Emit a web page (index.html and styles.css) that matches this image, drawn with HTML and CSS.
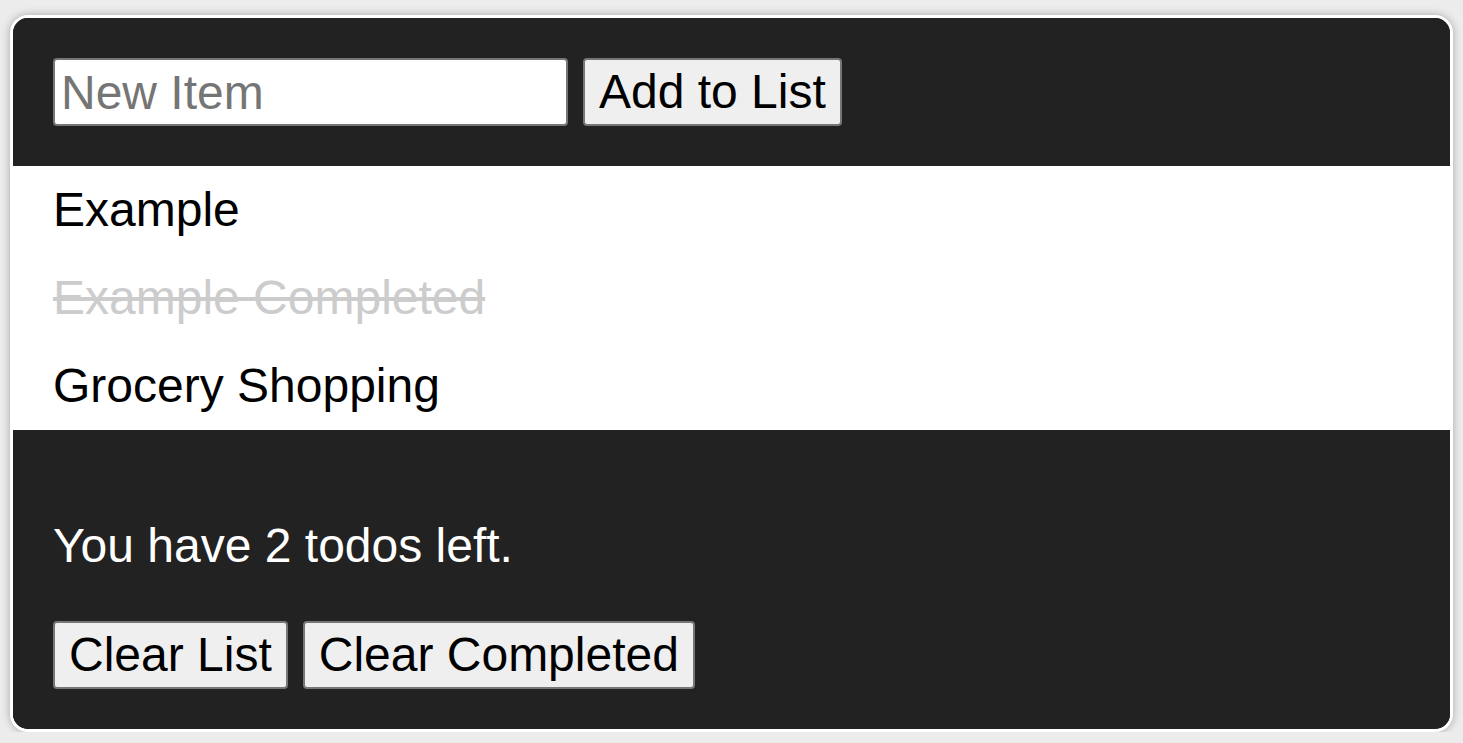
FILE: index.html
```html
<!DOCTYPE html>
<html lang="en">
<head>
<meta charset="utf-8">
<title>Todo List</title>
<link rel="stylesheet" href="styles.css">
</head>
<body>
<div class="card">
  <div class="header">
    <input class="new-item" type="text" placeholder="New Item">
    <button class="btn">Add to List</button>
  </div>
  <ul class="list">
    <li class="item">Example</li>
    <li class="item done">Example Completed</li>
    <li class="item">Grocery Shopping</li>
  </ul>
  <div class="footer">
    <p class="count">You have 2 todos left.</p>
    <div class="actions">
      <button class="btn">Clear List</button>
      <button class="btn">Clear Completed</button>
    </div>
  </div>
</div>
</body>
</html>
```
FILE: styles.css
```css
html, body {
  margin: 0;
  padding: 0;
}
body {
  background: #ececec;
  font-family: "Liberation Sans", Arial, Helvetica, sans-serif;
  padding: 15px 10px 0;
}
.card {
  border: 3px solid #ffffff;
  border-radius: 18px;
  overflow: hidden;
  box-shadow: 0 0 8px rgba(0, 0, 0, 0.3);
  background: #222222;
}
.header {
  display: flex;
  align-items: center;
  gap: 15px;
  padding: 40px;
  background: #222222;
}
.new-item {
  box-sizing: border-box;
  width: 515px;
  height: 68px;
  margin: 0;
  padding: 2px 6px;
  border: 2px solid #767676;
  border-radius: 4px;
  background: #ffffff;
  font-family: "Liberation Sans", Arial, Helvetica, sans-serif;
  font-size: 48px;
  color: #000;
}
.new-item::placeholder {
  color: #757575;
}
.btn {
  box-sizing: border-box;
  height: 68px;
  margin: 0;
  padding: 0 14px;
  border: 2px solid #767676;
  border-radius: 4px;
  background: #efefef;
  color: #000;
  font-family: "Liberation Sans", Arial, Helvetica, sans-serif;
  font-size: 48px;
  line-height: 1;
}
.list {
  list-style: none;
  margin: 0;
  padding: 0;
  background: #ffffff;
}
.item {
  padding: 16px 40px 17px;
  font-size: 48px;
  line-height: 55px;
  color: #000;
}
.item.done {
  color: #cccccc;
  text-decoration: line-through;
}
.footer {
  padding: 40px;
  background: #222222;
}
.count {
  margin: 48px 0;
  font-size: 48px;
  line-height: 55px;
  color: #ffffff;
}
.actions {
  display: flex;
  gap: 15px;
}
```
